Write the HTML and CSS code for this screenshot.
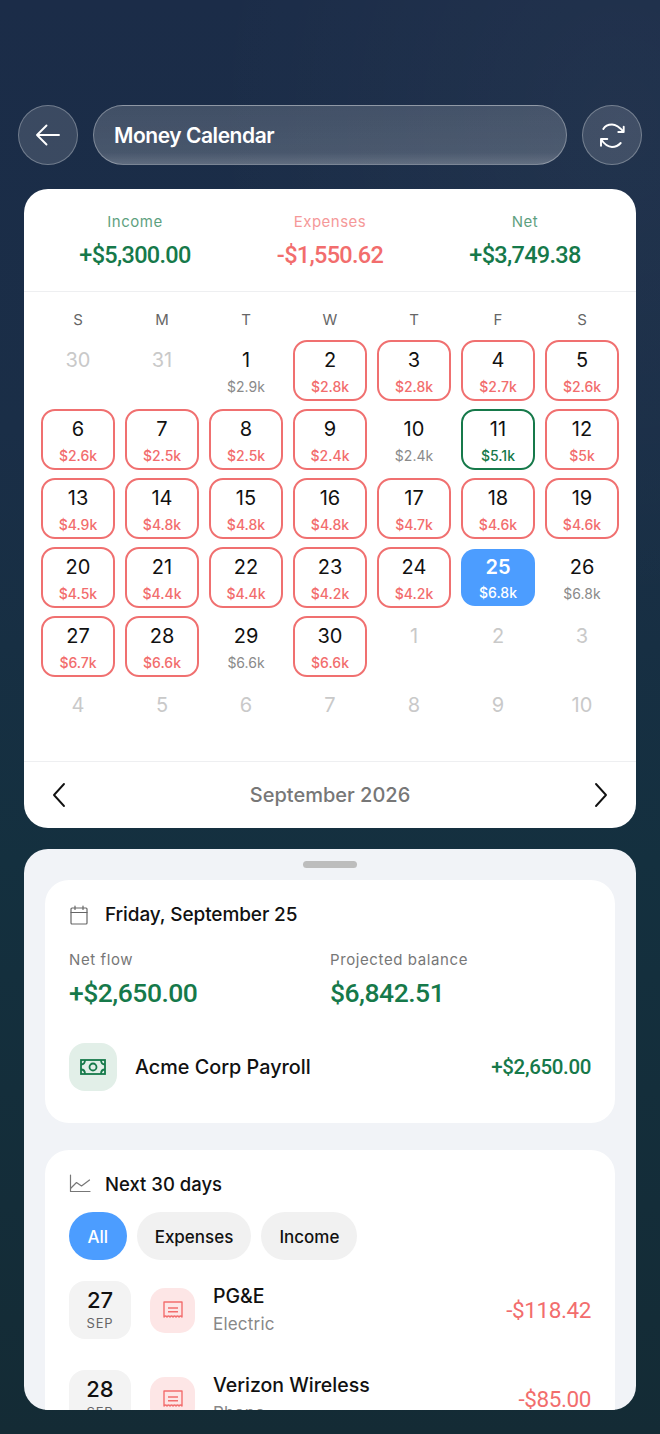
FILE: index.html
```html
<!DOCTYPE html>
<html lang="en">
<head>
<meta charset="utf-8">
<title>Money Calendar</title>
<link rel="stylesheet" href="styles.css">
</head>
<body>
<div class="screen">
  <header class="topbar">
    <button class="round-btn" aria-label="Back">
      <svg width="30" height="30" viewBox="0 0 30 30" fill="none" stroke="#fff" stroke-width="1.900" stroke-linecap="round" stroke-linejoin="round"><path d="M26 15H4M13.500 5.500 4 15l9.500 9.500"/></svg>
    </button>
    <div class="title-pill">Money Calendar</div>
    <button class="round-btn" aria-label="Refresh">
      <svg width="30" height="30" viewBox="0 0 30 30" fill="none" stroke="#fff" stroke-width="1.900" stroke-linecap="round" stroke-linejoin="round"><path d="M6.300 9C8 6 11 4.500 15 4.500c4.500 0 7.500 2.500 11.700 7.500M26.700 6.700V12h-5.400"/><path d="M23.700 23c-2.200 2.500-5 4-8.700 4-4.500 0-7.500-2.500-11-7.700M4 25.700V19h6.300"/></svg>
    </button>
  </header>

  <section class="calendar-card">
    <div class="summary">
      <div class="stat green"><span class="stat-label">Income</span><span class="stat-value">+$5,300.00</span></div>
      <div class="stat red"><span class="stat-label">Expenses</span><span class="stat-value">-$1,550.62</span></div>
      <div class="stat green"><span class="stat-label">Net</span><span class="stat-value">+$3,749.38</span></div>
    </div>
    <div class="calendar-body">
      <div class="weekdays"><span>S</span><span>M</span><span>T</span><span>W</span><span>T</span><span>F</span><span>S</span></div>
      <div class="days">
        <div class="day muted"><b>30</b></div>
        <div class="day muted"><b>31</b></div>
        <div class="day"><b>1</b><small>$2.9k</small></div>
        <div class="day low"><b>2</b><small>$2.8k</small></div>
        <div class="day low"><b>3</b><small>$2.8k</small></div>
        <div class="day low"><b>4</b><small>$2.7k</small></div>
        <div class="day low"><b>5</b><small>$2.6k</small></div>
        <div class="day low"><b>6</b><small>$2.6k</small></div>
        <div class="day low"><b>7</b><small>$2.5k</small></div>
        <div class="day low"><b>8</b><small>$2.5k</small></div>
        <div class="day low"><b>9</b><small>$2.4k</small></div>
        <div class="day"><b>10</b><small>$2.4k</small></div>
        <div class="day high"><b>11</b><small>$5.1k</small></div>
        <div class="day low"><b>12</b><small>$5k</small></div>
        <div class="day low"><b>13</b><small>$4.9k</small></div>
        <div class="day low"><b>14</b><small>$4.8k</small></div>
        <div class="day low"><b>15</b><small>$4.8k</small></div>
        <div class="day low"><b>16</b><small>$4.8k</small></div>
        <div class="day low"><b>17</b><small>$4.7k</small></div>
        <div class="day low"><b>18</b><small>$4.6k</small></div>
        <div class="day low"><b>19</b><small>$4.6k</small></div>
        <div class="day low"><b>20</b><small>$4.5k</small></div>
        <div class="day low"><b>21</b><small>$4.4k</small></div>
        <div class="day low"><b>22</b><small>$4.4k</small></div>
        <div class="day low"><b>23</b><small>$4.2k</small></div>
        <div class="day low"><b>24</b><small>$4.2k</small></div>
        <div class="day selected"><b>25</b><small>$6.8k</small></div>
        <div class="day"><b>26</b><small>$6.8k</small></div>
        <div class="day low"><b>27</b><small>$6.7k</small></div>
        <div class="day low"><b>28</b><small>$6.6k</small></div>
        <div class="day"><b>29</b><small>$6.6k</small></div>
        <div class="day low"><b>30</b><small>$6.6k</small></div>
        <div class="day muted"><b>1</b></div>
        <div class="day muted"><b>2</b></div>
        <div class="day muted"><b>3</b></div>
        <div class="day muted"><b>4</b></div>
        <div class="day muted"><b>5</b></div>
        <div class="day muted"><b>6</b></div>
        <div class="day muted"><b>7</b></div>
        <div class="day muted"><b>8</b></div>
        <div class="day muted"><b>9</b></div>
        <div class="day muted"><b>10</b></div>
      </div>
    </div>
    <footer class="month-nav">
      <svg width="16" height="26" viewBox="0 0 16 26" fill="none" stroke="#111" stroke-width="1.900" stroke-linecap="round" stroke-linejoin="round"><path d="M13 2 3 13l10 11"/></svg>
      <span class="month-name">September 2026</span>
      <svg width="16" height="26" viewBox="0 0 16 26" fill="none" stroke="#111" stroke-width="1.900" stroke-linecap="round" stroke-linejoin="round"><path d="M3 2l10 11L3 24"/></svg>
    </footer>
  </section>

  <section class="sheet">
    <div class="handle"></div>
    <div class="panel panel-day">
      <div class="panel-head">
        <svg width="20" height="20" viewBox="0 0 20 20" fill="none" stroke="#666" stroke-width="1.200" stroke-linecap="round" stroke-linejoin="round"><rect x="2" y="3" width="16" height="16" rx="1"/><path d="M2 7.500h16M6 1v3.500M14 1v3.500"/></svg>
        <h2 class="day-title">Friday, September 25</h2>
      </div>
      <div class="flows">
        <div class="flow"><span class="flow-label">Net flow</span><span class="flow-value">+$2,650.00</span></div>
        <div class="flow"><span class="flow-label">Projected balance</span><span class="flow-value">$6,842.51</span></div>
      </div>
      <div class="payroll">
        <div class="icon-box money">
          <svg width="26" height="18" viewBox="0 0 26 18" fill="none" stroke="#16794a" stroke-width="1.800"><rect x="1" y="2" width="24" height="14"/><circle cx="13" cy="9" r="3.500"/><path d="M1 6.500c2.500 0 4-2 4-4.500M25 6.500c-2.500 0-4-2-4-4.500M1 11.500c2.500 0 4 2 4 4.500M25 11.500c-2.500 0-4 2-4 4.500"/></svg>
        </div>
        <span class="payroll-name">Acme Corp Payroll</span>
        <span class="payroll-amount">+$2,650.00</span>
      </div>
    </div>
    <div class="panel panel-next">
      <div class="panel-head next-head">
        <svg width="22" height="20" viewBox="0 0 22 20" fill="none" stroke="#777" stroke-width="1.200" stroke-linecap="round" stroke-linejoin="round"><path d="M1.500 1v16.500h19.500"/><path d="M2 14l5.500-5.500 5 3.500 8-6"/></svg>
        <h2 class="next-title">Next 30 days</h2>
      </div>
      <div class="chips">
        <span class="chip active">All</span>
        <span class="chip">Expenses</span>
        <span class="chip">Income</span>
      </div>
      <div class="bill">
        <div class="date-box"><b>27</b><small>SEP</small></div>
        <div class="icon-box receipt">
          <svg width="22" height="20" viewBox="0 0 22 20" fill="none" stroke="#f26d6d" stroke-width="1.400" stroke-linejoin="round"><path d="M2 2h18v15q-1.500-2-3 0q-1.500-2-3 0q-1.500-2-3 0q-1.500-2-3 0q-1.500-2-3 0q-1.500-2-3 0z"/><path d="M6 8h10M6 11.800h10"/></svg>
        </div>
        <div class="bill-text"><span class="bill-name">PG&amp;E</span><span class="bill-sub">Electric</span></div>
        <span class="bill-amount">-$118.42</span>
      </div>
      <div class="bill">
        <div class="date-box"><b>28</b><small>SEP</small></div>
        <div class="icon-box receipt">
          <svg width="22" height="20" viewBox="0 0 22 20" fill="none" stroke="#f26d6d" stroke-width="1.400" stroke-linejoin="round"><path d="M2 2h18v15q-1.500-2-3 0q-1.500-2-3 0q-1.500-2-3 0q-1.500-2-3 0q-1.500-2-3 0q-1.500-2-3 0z"/><path d="M6 8h10M6 11.800h10"/></svg>
        </div>
        <div class="bill-text"><span class="bill-name">Verizon Wireless</span><span class="bill-sub">Phone</span></div>
        <span class="bill-amount">-$85.00</span>
      </div>
    </div>
  </section>
</div>
</body>
</html>
```

FILE: styles.css
```css
* { box-sizing: border-box; margin: 0; padding: 0; }
html, body { width: 660px; height: 1434px; overflow: hidden; }
body {
  font-family: "Inter", "Liberation Sans", sans-serif;
  color: #111;
  background:
    radial-gradient(ellipse 420px 500px at 620px 120px, rgba(255,255,255,0.03), rgba(255,255,255,0) 100%),
    linear-gradient(180deg, #1b2c48 0%, #1a2e47 30%, #14303f 60%, #142b35 100%);
}
.screen { display: flex; flex-direction: column; height: 1434px; padding-top: 105px; }

.topbar { display: flex; align-items: stretch; gap: 15px; height: 60px; padding: 0 18px; }
.round-btn {
  width: 60px; height: 60px; border-radius: 50%;
  display: flex; align-items: center; justify-content: center;
  background: rgba(255, 255, 255, 0.14);
  border: 1px solid rgba(255, 255, 255, 0.28);
  flex: none;
}
.title-pill {
  flex: 1; display: flex; align-items: center; padding-left: 20px;
  border-radius: 30px;
  border: 1px solid rgba(255, 255, 255, 0.3);
  background: linear-gradient(180deg, rgba(255,255,255,0.17), rgba(255,255,255,0.2) 80%, rgba(255,255,255,0.3));
  color: #fff; font-size: 21px; font-weight: 600; letter-spacing: -0.45px;
}

.calendar-card {
  margin: 24px 24px 0; height: 639px; flex: none;
  background: #fff; border-radius: 24px;
  display: flex; flex-direction: column;
}
.summary {
  display: grid; grid-template-columns: 222px 168px 222px;
  height: 103px; padding-top: 24px;
  border-bottom: 1px solid #eeeff1;
}
.stat { display: flex; flex-direction: column; align-items: center; gap: 10px; }
.stat-label { font-size: 15px; line-height: 18px; opacity: 0.7; font-weight: 400; letter-spacing: 0.5px; }
.stat-value { font-family: "Roboto", "Liberation Sans", sans-serif; font-size: 23.500px; line-height: 28px; font-weight: 500; letter-spacing: -0.7px; }
.green { color: #16794a; }
.red { color: #f26d6d; }

.calendar-body { flex: 1; padding: 18px 16px 0 17px; }
.weekdays {
  display: grid; grid-template-columns: repeat(7, 74px); column-gap: 10px;
  height: 20px; margin-bottom: 10px;
  font-size: 15px; line-height: 20px; color: #666; text-align: center;
}
.days { display: grid; grid-template-columns: repeat(7, 74px); column-gap: 10px; grid-auto-rows: 61px; row-gap: 8px; }
.day {
  display: flex; flex-direction: column; align-items: center;
  padding-top: 5px; border-radius: 14px; border: 2px solid transparent;
}
.day b { font-size: 20px; line-height: 26px; font-weight: 400; color: #111; }
.day small { font-size: 14px; line-height: 18px; margin-top: 5px; color: #8a8a8a; }
.day.muted b { color: #c9c9c9; }
.day.low { border-color: #f07070; }
.day.low small { color: #f26d6d; font-weight: 500; }
.day.high { border-color: #16794a; }
.day.high small { color: #16794a; font-weight: 500; }
.day.selected { background: #4c9dff; border: 0; margin: 2px 0; height: 57px; padding-top: 5px; }
.day.selected b { color: #fff; font-weight: 600; }
.day.selected small { color: #fff; font-weight: 500; margin-top: 4px; }

.month-nav {
  display: flex; align-items: center; justify-content: space-between;
  height: 67px; padding: 0 27px;
  border-top: 1px solid #eeeff1;
}
.month-name { font-size: 20px; font-weight: 500; color: #777; }

.sheet {
  position: relative;
  margin: 21px 24px 0; height: 561px; flex: none; overflow: hidden;
  background: #f1f3f7; border-radius: 24px;
  padding: 0 21px;
}
.handle { width: 54px; height: 7px; border-radius: 4px; background: #bdbdbd; margin: 12px auto 12px; }
.panel { background: #fff; border-radius: 24px; padding: 0 24px; }
.panel-day { height: 243px; padding-top: 21px; }
.panel-next { margin-top: 27px; height: 400px; padding-top: 20px; }
.panel-head { display: flex; align-items: center; gap: 16px; height: 28px; }
.panel-head svg { flex: none; }
.day-title { font-size: 19px; line-height: 28px; font-weight: 500; letter-spacing: -0.1px; }
.next-title { font-size: 18.500px; line-height: 28px; font-weight: 500; }
.next-head { gap: 14px; }

.flows { display: grid; grid-template-columns: 261px 1fr; margin-top: 21px; }
.flow { display: flex; flex-direction: column; gap: 6px; }
.flow-label { font-size: 15px; line-height: 20px; color: #777; letter-spacing: 0.6px; }
.flow-value { font-family: "Roboto", "Liberation Sans", sans-serif; font-size: 26.500px; line-height: 34px; font-weight: 500; color: #16794a; letter-spacing: -0.5px; }

.payroll { display: flex; align-items: center; margin-top: 33px; }
.icon-box { display: flex; align-items: center; justify-content: center; flex: none; }
.money { width: 48px; height: 48px; border-radius: 16px; background: #e2efe8; }
.payroll-name { margin-left: 18px; flex: 1; font-size: 19.800px; font-weight: 500; }
.payroll-amount { font-family: "Roboto", "Liberation Sans", sans-serif; font-size: 20.500px; font-weight: 500; color: #16794a; letter-spacing: -0.35px; }

.chips { display: flex; gap: 10px; margin-top: 14px; }
.chip {
  height: 48px; padding: 2px 18px 0; border-radius: 24px;
  display: flex; align-items: center;
  background: #f1f1f1; font-size: 17px; font-weight: 500;
}
.chip.active { background: #4c9dff; color: #fff; padding: 2px 18.500px 0; }

.bill { display: flex; align-items: center; height: 60px; margin-top: 20px; }
.bill + .bill { margin-top: 29px; }
.date-box {
  width: 62px; height: 58px; border-radius: 16px; background: #f3f3f3;
  display: flex; flex-direction: column; align-items: center; justify-content: center; flex: none;
  padding-bottom: 1px;
}
.date-box b { font-size: 22px; line-height: 24px; font-weight: 500; }
.date-box small { font-size: 13px; line-height: 16px; margin-top: 3px; color: #666; letter-spacing: 0.8px; }
.receipt { width: 45px; height: 45px; border-radius: 15px; background: #fde6e6; margin-left: 19px; }
.bill-text { flex: 1; display: flex; flex-direction: column; margin-left: 18px; }
.bill-name { font-size: 19.500px; line-height: 28px; font-weight: 500; }
.bill-sub { font-size: 17px; line-height: 28px; color: #888; letter-spacing: 0.2px; }
.bill-amount { font-family: "Roboto", "Liberation Sans", sans-serif; font-size: 22.500px; font-weight: 400; color: #f26d6d; letter-spacing: -0.4px; }
```
